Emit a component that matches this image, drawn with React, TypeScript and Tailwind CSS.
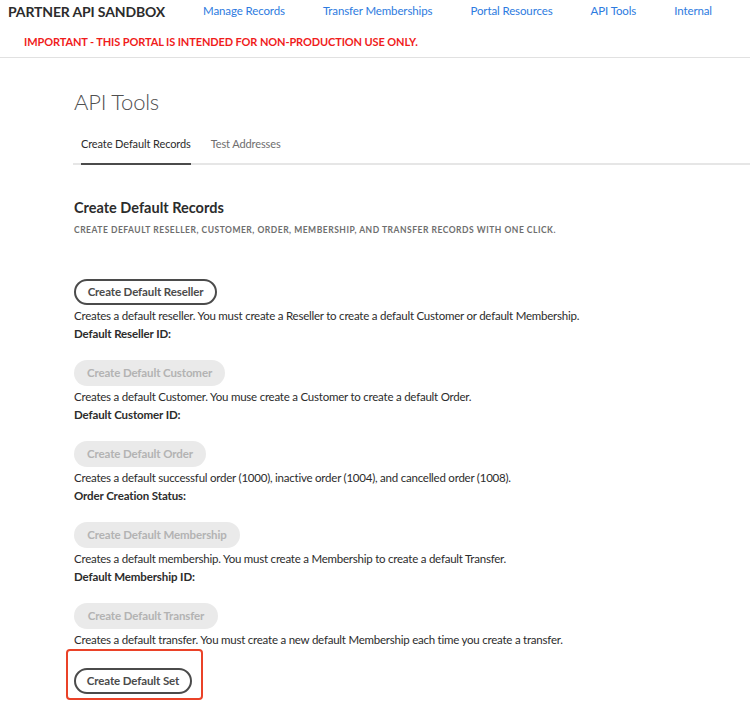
import React from 'react'

const navLinks = ['Manage Records', 'Transfer Memberships', 'Portal Resources', 'API Tools', 'Internal']

type Section = {
    label: string
    width: string
    enabled: boolean
    desc: string
    field?: string
}

const sections: Section[] = [
    {
        label: 'Create Default Reseller',
        width: 'w-[143px]',
        enabled: true,
        desc: 'Creates a default reseller. You must create a Reseller to create a default Customer or default Membership.',
        field: 'Default Reseller ID:',
    },
    {
        label: 'Create Default Customer',
        width: 'w-[151px]',
        enabled: false,
        desc: 'Creates a default Customer. You muse create a Customer to create a default Order.',
        field: 'Default Customer ID:',
    },
    {
        label: 'Create Default Order',
        width: 'w-[132px]',
        enabled: false,
        desc: 'Creates a default successful order (1000), inactive order (1004), and cancelled order (1008).',
        field: 'Order Creation Status:',
    },
    {
        label: 'Create Default Membership',
        width: 'w-[166px]',
        enabled: false,
        desc: 'Creates a default membership. You must create a Membership to create a default Transfer.',
        field: 'Default Membership ID:',
    },
    {
        label: 'Create Default Transfer',
        width: 'w-[144px]',
        enabled: false,
        desc: 'Creates a default transfer. You must create a new default Membership each time you create a transfer.',
    },
]

function PillButton({ label, width, enabled }: { label: string; width: string; enabled: boolean }) {
    return (
        <button
            type="button"
            disabled={!enabled}
            className={`block ${width} h-[26px] rounded-full text-[11.5px] font-bold leading-none tracking-[-0.01em] ${
                enabled ? 'border-2 border-[#4b4b4b] text-[#4b4b4b] bg-white' : 'bg-[#eaeaea] text-[#b3b3b3]'
            }`}
        >
            {label}
        </button>
    )
}

export default function App() {
    return (
        <div className="min-h-screen bg-white text-[#2c2c2c] font-['Lato','Open_Sans',sans-serif]">
            {/* top bar */}
            <header className="border-b border-[#e1e1e1] pb-[7px]">
                <div className="flex items-center gap-[38px] pl-2 h-[22px] whitespace-nowrap">
                    <span className="text-[14px] font-bold text-[#2c2c2c] tracking-[-0.01em]">PARTNER API SANDBOX</span>
                    {navLinks.map((l) => (
                        <a key={l} href="#" className="text-[11.5px] text-[#2d7be0] tracking-[-0.01em]">
                            {l}
                        </a>
                    ))}
                </div>
                <p className="mt-3 pl-6 text-[11px] leading-[16px] font-bold tracking-[-0.01em] text-[#f01c1c]">
                    IMPORTANT - THIS PORTAL IS INTENDED FOR NON-PRODUCTION USE ONLY.
                </p>
            </header>

            <main className="pl-[74px]">
                <h1 className="mt-[28px] text-[22px] leading-[32px] font-light tracking-[-0.01em] text-[#505050]">API Tools</h1>

                <div className="mt-[17px] -ml-px flex gap-5 pl-2 border-b-2 border-[#e6e6e6]">
                    <div className="pb-[10px] -mb-[2px] border-b-2 border-[#4b4b4b] text-[11px] leading-[18px] tracking-[-0.01em] text-[#2c2c2c]">
                        Create Default Records
                    </div>
                    <div className="pb-[10px] text-[11px] leading-[18px] tracking-[-0.01em] text-[#6e6e6e]">Test Addresses</div>
                </div>

                <h2 className="mt-[33px] text-[14.5px] leading-[20px] font-bold text-[#2c2c2c]">Create Default Records</h2>
                <p className="mt-[5px] text-[8.5px] leading-[14px] font-bold uppercase tracking-[0.06em] text-[#6e6e6e]">
                    Create default reseller, customer, order, membership, and transfer records with one click.
                </p>

                <div className="mt-[42px] flex flex-col">
                    {sections.map((s) => (
                        <div key={s.label} className={s.field ? 'pb-[17px]' : ''}>
                            <PillButton label={s.label} width={s.width} enabled={s.enabled} />
                            <p className="mt-[2px] text-[11.5px] leading-[18px] tracking-[-0.02em]">{s.desc}</p>
                            {s.field && (
                                <p className="text-[11.5px] leading-[18px] font-bold tracking-[-0.01em]">{s.field}</p>
                            )}
                        </div>
                    ))}

                    <div className="-ml-2 self-start rounded-[4px] border-2 border-[#ea4228] pl-[6px] pr-[9px] pt-[17px] pb-[4px]">
                        <PillButton label="Create Default Set" width="w-[118px]" enabled />
                    </div>
                </div>
            </main>
        </div>
    )
}
